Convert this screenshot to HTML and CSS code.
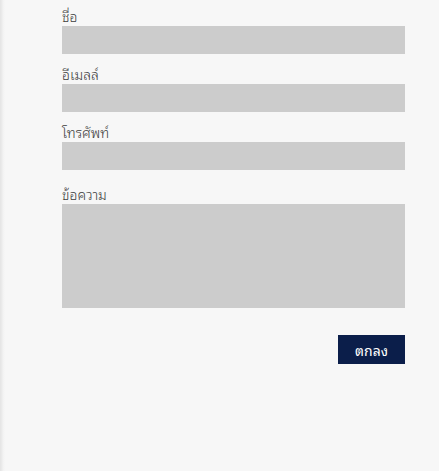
FILE: index.html
```html
<!DOCTYPE html>
<html lang="th">
<head>
<meta charset="utf-8">
<link rel="stylesheet" href="styles.css">
</head>
<body>
<div class="page">
  <form class="form">
    <div class="field">
      <label class="label">ชื่อ</label>
      <div class="input"></div>
    </div>
    <div class="field">
      <label class="label">อีเมลล์</label>
      <div class="input"></div>
    </div>
    <div class="field">
      <label class="label">โทรศัพท์</label>
      <div class="input"></div>
    </div>
    <div class="field field-msg">
      <label class="label">ข้อความ</label>
      <div class="input textarea"></div>
    </div>
    <div class="actions">
      <button type="button" class="btn">ตกลง</button>
    </div>
  </form>
</div>
</body>
</html>
```
FILE: styles.css
```css
html, body {
  margin: 0;
  height: 100%;
}
body {
  background: #f7f7f7;
  font-family: "Noto Sans Thai Looped", "Noto Sans", sans-serif;
}
.page {
  min-height: 100%;
  box-sizing: border-box;
  background: linear-gradient(to right, #e4e4e4 0, #ececec 2px, #f2f2f2 3px, #f7f7f7 5px) no-repeat left / 5px 100%, #f7f7f7;
  padding: 6px 0 0 62px;
}
.form {
  width: 343px;
  display: flex;
  flex-direction: column;
}
.field {
  display: flex;
  flex-direction: column;
  margin-bottom: 10px;
}
.field-msg {
  margin-top: 4px;
}
.label {
  font-size: 14px;
  font-weight: 300;
  line-height: 20px;
  color: #3c3c3c;
}
.input {
  height: 28px;
  background: #cccccc;
}
.textarea {
  height: 104px;
}
.actions {
  display: flex;
  justify-content: flex-end;
  margin-top: 17px;
}
.btn {
  width: 67px;
  height: 29px;
  border: none;
  background: #0b1e4a;
  color: #fff;
  font-family: inherit;
  font-size: 14px;
  padding: 0;
}
```
